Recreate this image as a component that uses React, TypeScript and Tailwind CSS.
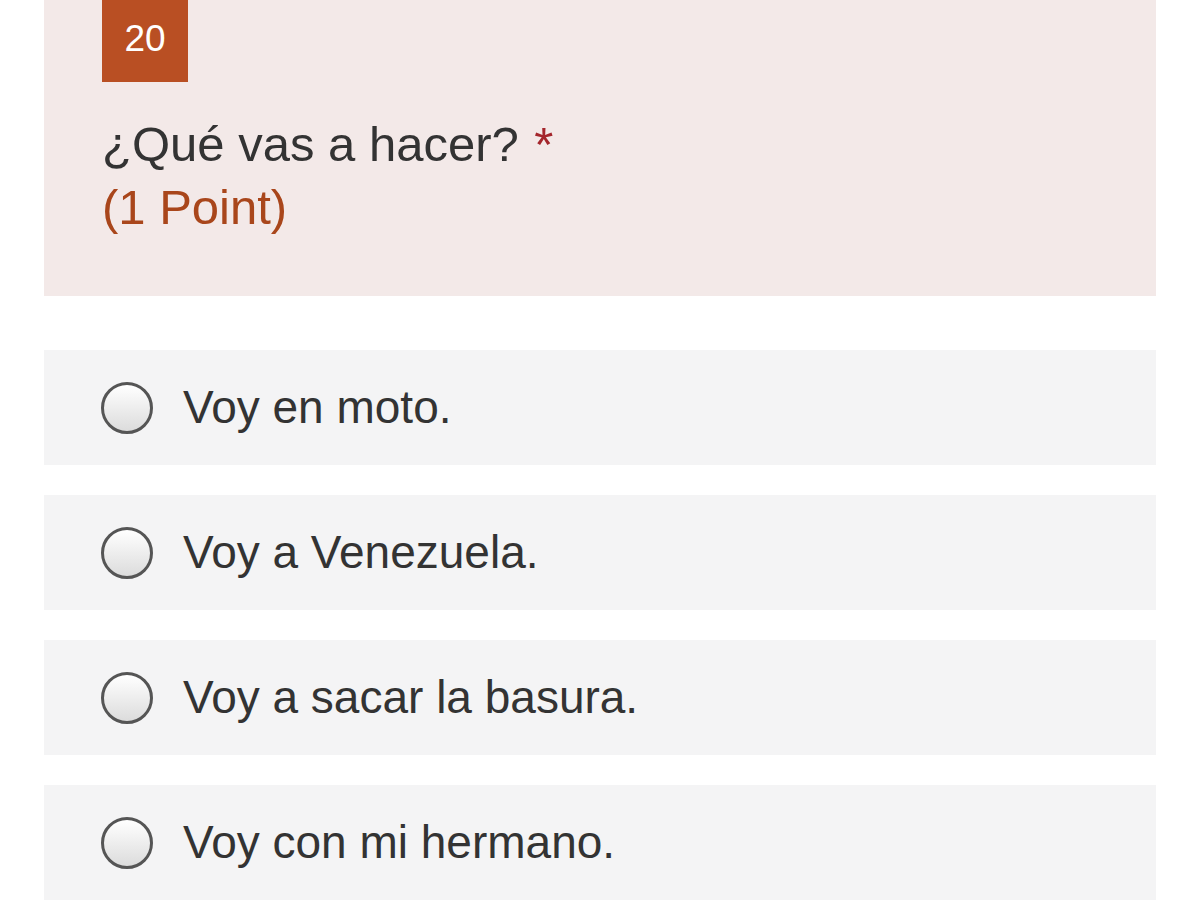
export default function App() {
  const options = [
    "Voy en moto.",
    "Voy a Venezuela.",
    "Voy a sacar la basura.",
    "Voy con mi hermano.",
  ];

  return (
    <div className="min-h-[902px] bg-white font-['Liberation_Sans',Arial,sans-serif] text-[#333333]">
      <div className="mx-[44px] flex flex-col">
        {/* question header */}
        <div className="h-[296px] bg-[#f3e9e8] pl-[58px]">
          <div className="flex h-[82px] w-[86px] items-center justify-center bg-[#b94f23] pb-[4px] text-[37px] text-white">
            20
          </div>
          <div className="mt-[31px] text-[49px] leading-[63px]">
            <div>
              ¿Qué vas a hacer? <span className="ml-[2px] text-[#a4262c]">*</span>
            </div>
            <div className="text-[#a9461b]">(1 Point)</div>
          </div>
        </div>

        {/* options */}
        <div className="mt-[54px] flex flex-col gap-[30px]">
          {options.map((opt) => (
            <label
              key={opt}
              className="flex h-[115px] items-center bg-[#f4f4f5] pl-[57px]"
            >
              <span className="h-[52px] w-[52px] rounded-full border-[3px] border-[#555555] bg-gradient-to-b from-white to-[#dcdcdc]" />
              <span className="ml-[30px] text-[46px]">{opt}</span>
            </label>
          ))}
        </div>
      </div>
    </div>
  );
}
